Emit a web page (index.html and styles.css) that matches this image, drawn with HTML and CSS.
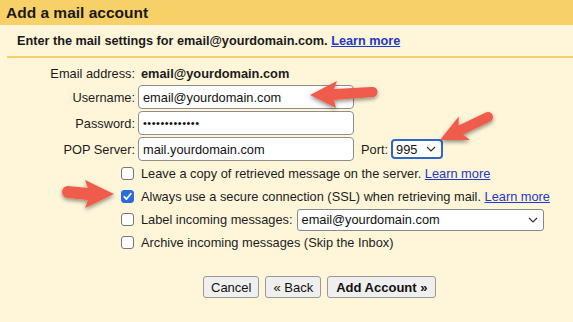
FILE: index.html
```html
<!DOCTYPE html>
<html>
<head>
<meta charset="utf-8">
<link rel="stylesheet" href="styles.css">
</head>
<body>
<div class="page">
  <div class="header">Add a mail account</div>
  <div class="sub">Enter the mail settings for email@yourdomain.com.&nbsp;<a class="link" href="#">Learn more</a></div>
  <div class="rule"></div>

  <div class="form">
    <div class="label">Email address:</div>
    <div class="value bold">email@yourdomain.com</div>

    <div class="label">Username:</div>
    <div class="field"><div class="input">email@yourdomain.com</div></div>

    <div class="label">Password:</div>
    <div class="field"><div class="input dots">•••••••••••••</div></div>

    <div class="label">POP Server:</div>
    <div class="field">
      <div class="input">mail.yourdomain.com</div>
      <span class="port">Port:</span>
      <div class="select focus">995
        <svg class="chev" width="10" height="6" viewBox="0 0 10 6"><path d="M1 1 L5 5 L9 1" fill="none" stroke="#333" stroke-width="1.2"/></svg>
      </div>
    </div>

    <div class="cbcell"><span class="cb"></span></div>
    <div class="opt">Leave a copy of retrieved message on the server.&nbsp;<a class="link" href="#">Learn more</a></div>

    <div class="cbcell"><span class="cb on"><svg width="13" height="13" viewBox="0 0 13 13"><path d="M3.3 6.8 L5.5 9 L9.8 3.8" fill="none" stroke="#fff" stroke-width="1.8" stroke-linecap="round" stroke-linejoin="round"/></svg></span></div>
    <div class="opt">Always use a secure connection (SSL) when retrieving mail.&nbsp;<a class="link" href="#">Learn more</a></div>

    <div class="cbcell"><span class="cb"></span></div>
    <div class="opt">Label incoming messages:
      <div class="select wide">email@yourdomain.com
        <svg class="chev" width="10" height="6" viewBox="0 0 10 6"><path d="M1 1 L5 5 L9 1" fill="none" stroke="#333" stroke-width="1.2"/></svg>
      </div>
    </div>

    <div class="cbcell"><span class="cb"></span></div>
    <div class="opt">Archive incoming messages (Skip the Inbox)</div>

    <div class="buttons">
      <button class="btn">Cancel</button>
      <button class="btn">« Back</button>
      <button class="btn bold wide-btn">Add Account »</button>
    </div>
  </div>

  <svg class="arrows" width="573" height="322" viewBox="0 0 573 322">
    <defs>
      <filter id="sh" x="-30%" y="-30%" width="160%" height="160%">
        <feDropShadow dx="0" dy="2" stdDeviation="2" flood-color="#000" flood-opacity="0.45"/>
      </filter>
    </defs>
    <g fill="#ef5b4b" filter="url(#sh)">
      <path d="M310,95 L337,81 L334,89 L372,87 A5,5 0 0 1 373,97 L334,100 L336,108 Z"/>
      <path d="M440,140 L458.8,116.5 L458.6,125.5 L485.8,112.5 A5,5 0 0 1 490.2,121.5 L463,134.5 L470,140.1 Z"/>
      <path d="M114,194 L85,180 L88,188 L68,186 A6,6 0 0 0 68,198 L88,200 L85,208 Z"/>
    </g>
  </svg>
</div>
</body>
</html>
```

FILE: styles.css
```css
* { box-sizing: border-box; }
html, body { margin: 0; padding: 0; }
body {
  background: #fff6da;
  font-family: "Liberation Sans", Arial, sans-serif;
  font-size: 12.8px;
  color: #1c1c1c;
}
.page {
  position: relative;
  width: 573px;
  height: 322px;
  overflow: hidden;
}
.header {
  height: 25px;
  line-height: 25px;
  background: #f8d068;
  padding-left: 6px;
  font-weight: bold;
  font-size: 15.5px;
  color: #1a1a1a;
}
.sub {
  height: 31px;
  padding-left: 17px;
  display: flex;
  align-items: center;
  font-weight: bold;
  font-size: 12.7px;
  color: #1a1a1a;
}
.rule {
  margin-left: 7px;
  height: 2px;
  background: #f8d068;
}
.link {
  color: #2338c7;
  text-decoration: underline;
}
.bold { font-weight: bold; }
.form {
  display: grid;
  grid-template-columns: 135px 1fr;
  column-gap: 3px;
  row-gap: 2px;
  padding-top: 5px;
}
.label {
  display: flex;
  align-items: center;
  justify-content: flex-end;
  height: 24px;
}
.form > .label:first-child { height: 20px; }
.value {
  display: flex;
  align-items: center;
  padding-left: 3px;
  height: 20px;
}
.field {
  display: flex;
  align-items: center;
  height: 24px;
}
.input {
  width: 216px;
  height: 24px;
  border: 1px solid #8e8e8e;
  border-radius: 4px;
  background: #fff;
  padding-left: 4px;
  display: flex;
  align-items: center;
  color: #111;
}
.dots { font-size: 11px; letter-spacing: 0.5px; }
.port { margin-left: 7px; margin-right: 3px; }
.select {
  display: inline-flex;
  align-items: center;
  justify-content: space-between;
  height: 20px;
  background: #fff;
  border: 1px solid #888;
  border-radius: 3px;
  padding: 0 5px 0 4px;
  color: #111;
}
.select.focus {
  width: 52px;
  border: 2px solid #2f66c9;
  border-radius: 4px;
  padding-left: 3px;
}
.select.wide {
  width: 247px;
  height: 22px;
  margin-left: 4px;
}
.chev { display: block; }
.cbcell {
  display: flex;
  align-items: center;
  justify-content: flex-end;
  padding-right: 1px;
  height: 21px;
}
.cb {
  width: 13px;
  height: 13px;
  border: 1px solid #777;
  border-radius: 3px;
  background: #fff;
  display: block;
}
.cb.on {
  background: #2a6be0;
  border-color: #2a6be0;
  position: relative;
}
.cb.on svg { position: absolute; left: -1px; top: -1px; }
.opt {
  display: flex;
  align-items: center;
  height: 21px;
  padding-left: 3px;
  white-space: nowrap;
}
.buttons {
  grid-column: 2;
  display: flex;
  gap: 6px;
  margin-top: 21px;
  padding-left: 65px;
}
.btn {
  font-family: "Liberation Sans", Arial, sans-serif;
  font-size: 13px;
  color: #111;
  height: 22px;
  background: #efefef;
  border: 1px solid #999;
  border-radius: 3px;
  padding: 0 7px;
}
.btn.wide-btn { padding: 0 8px; }
.arrows {
  position: absolute;
  left: 0;
  top: 0;
  pointer-events: none;
}
```
